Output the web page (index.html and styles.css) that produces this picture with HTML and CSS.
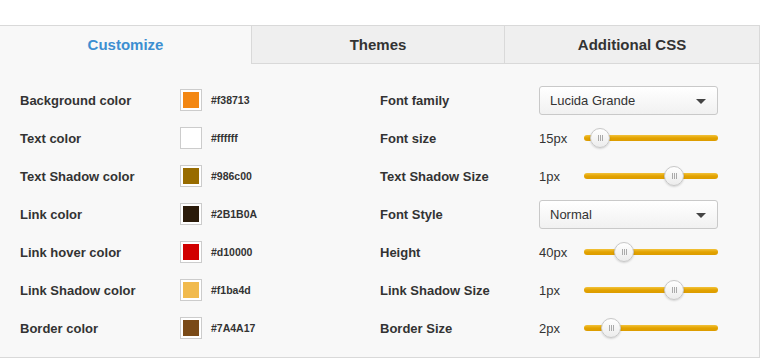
FILE: index.html
```html
<!DOCTYPE html>
<html>
<head>
<meta charset="utf-8">
<link rel="stylesheet" href="styles.css">
</head>
<body>
<div class="panel">
  <div class="tabs">
    <div class="tab tab-active">Customize</div>
    <div class="tab tab-mid">Themes</div>
    <div class="tab tab-last">Additional CSS</div>
  </div>
  <div class="content">
    <div class="col">
      <div class="row"><span class="label">Background color</span><span class="swatch"><i style="background:#f38713"></i></span><span class="hex">#f38713</span></div>
      <div class="row"><span class="label">Text color</span><span class="swatch"><i style="background:#ffffff"></i></span><span class="hex">#ffffff</span></div>
      <div class="row"><span class="label">Text Shadow color</span><span class="swatch"><i style="background:#986c00"></i></span><span class="hex">#986c00</span></div>
      <div class="row"><span class="label">Link color</span><span class="swatch"><i style="background:#2B1B0A"></i></span><span class="hex">#2B1B0A</span></div>
      <div class="row"><span class="label">Link hover color</span><span class="swatch"><i style="background:#d10000"></i></span><span class="hex">#d10000</span></div>
      <div class="row"><span class="label">Link Shadow color</span><span class="swatch"><i style="background:#f1ba4d"></i></span><span class="hex">#f1ba4d</span></div>
      <div class="row"><span class="label">Border color</span><span class="swatch"><i style="background:#7A4A17"></i></span><span class="hex">#7A4A17</span></div>
    </div>
    <div class="col">
      <div class="row"><span class="label label-r">Font family</span><span class="select">Lucida Grande<b class="caret"></b></span></div>
      <div class="row"><span class="label label-r">Font size</span><span class="val">15px</span><span class="slider"><span class="thumb" style="left:6px"></span></span></div>
      <div class="row"><span class="label label-r">Text Shadow Size</span><span class="val">1px</span><span class="slider"><span class="thumb" style="left:80px"></span></span></div>
      <div class="row"><span class="label label-r">Font Style</span><span class="select">Normal<b class="caret"></b></span></div>
      <div class="row"><span class="label label-r">Height</span><span class="val">40px</span><span class="slider"><span class="thumb" style="left:30px"></span></span></div>
      <div class="row"><span class="label label-r">Link Shadow Size</span><span class="val">1px</span><span class="slider"><span class="thumb" style="left:80px"></span></span></div>
      <div class="row"><span class="label label-r">Border Size</span><span class="val">2px</span><span class="slider"><span class="thumb" style="left:17px"></span></span></div>
    </div>
  </div>
</div>
</body>
</html>
```
FILE: styles.css
```css
html, body { margin: 0; padding: 0; background: #fff; }
body { font-family: "Liberation Sans", Arial, Helvetica, sans-serif; color: #333; }
.panel {
  margin-top: 25px;
  width: 759px;
  border-top: 1px solid #d9d9d9;
  border-right: 1px solid #d9d9d9;
  border-bottom: 1px solid #d9d9d9;
  background: #f8f8f8;
}
.tabs { display: flex; height: 37px; }
.tab {
  display: flex; align-items: center; justify-content: center;
  font-weight: bold; font-size: 15px; color: #333;
  background: #efefef;
  border-bottom: 1px solid #d9d9d9;
  box-sizing: border-box; height: 38px;
}
.tab-active { width: 251px; background: #f8f8f8; color: #3d8fd1; border-bottom-color: transparent; }
.tab-mid { width: 253px; border-left: 1px solid #d9d9d9; }
.tab-last { width: 255px; border-left: 1px solid #d9d9d9; }
.content { display: flex; padding: 18px 0 10px 20px; }
.col { display: flex; flex-direction: column; }
.col:first-child { width: 360px; }
.row { display: flex; align-items: center; height: 38px; }
.label { width: 160px; font-weight: bold; font-size: 13px; }
.label-r { width: 159px; }
.swatch {
  width: 20px; height: 20px; border: 1px solid #ccc; background: #fff;
  box-sizing: content-box; display: flex; align-items: center; justify-content: center;
  margin-right: 9px;
}
.swatch i { display: block; width: 16px; height: 16px; }
.hex { font-weight: bold; font-size: 10.5px; }
.val { width: 45px; font-size: 13px; }
.slider {
  position: relative; width: 134px; height: 6px; border-radius: 3px;
  background: linear-gradient(#f2c23a, #e3a300 50%, #dc9c00);
}
.thumb {
  position: absolute; top: -7px; width: 18px; height: 18px; border-radius: 50%;
  border: 1px solid #c8c8c8; background: linear-gradient(#ffffff, #ececec);
  box-shadow: 0 1px 2px rgba(0,0,0,0.15);
}
.thumb::before {
  content: ""; position: absolute; left: 7px; top: 6px; width: 1px; height: 6px;
  background: #aaa; box-shadow: 2px 0 0 #aaa, 4px 0 0 #aaa;
}
.select {
  position: relative; box-sizing: border-box; width: 179px; height: 29px;
  border: 1px solid #c9c9c9; border-radius: 3px;
  background: linear-gradient(#ffffff, #f1f1f1);
  font-size: 13px; color: #333; display: flex; align-items: center; padding-left: 10px;
}
.caret {
  position: absolute; right: 11px; top: 12px; width: 0; height: 0;
  border-left: 5px solid transparent; border-right: 5px solid transparent;
  border-top: 5px solid #444;
}
```
